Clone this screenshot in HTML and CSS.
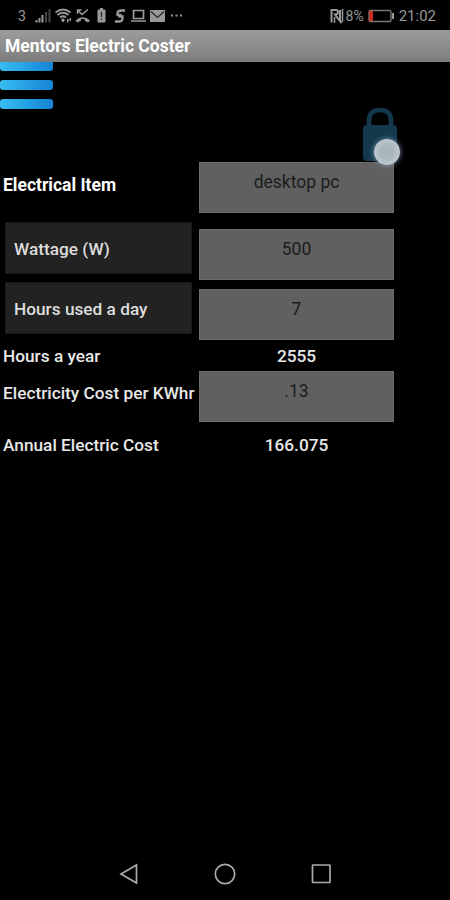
FILE: index.html
```
<!DOCTYPE html>
<html lang="en">
<head>
    <meta charset="UTF-8">
    <meta name="viewport" content="width=device-width, initial-scale=1.0">
    <title>Mentors Electric Coster</title>
    <link rel="stylesheet" href="styles.css">
</head>
<body>
    <div class="status-bar">
        <span class="carrier">3</span>
        <!-- signal, wifi, missed call, battery, sync, laptop, mail, more -->
        <svg class="status-icons" width="150" height="20" viewBox="35 6 150 20">
            <g fill="#999">
                <path d="M35.500 20h2v2.500h-2zM38.500 18h2v4.500h-2zM41.500 15h2v7.500h-2z"/>
                <path fill="#444" d="M45 12h2v10.500h-2zM48.500 9h2v13.500h-2z"/>
                <path d="M61 20l2-2 2 2-2 2.500zM67 19h1.500v3.500h-1.500zM69.500 18h1.500v3h-1.500z"/>
                <path d="M98.500 9.500h1.500v-1.500h3v1.500h1.500q1 0 1 1v11q0 1-1 1h-6q-1 0-1-1v-11q0-1 1-1z"/>
                <path d="M75.500 20.500q7-6.500 14.500 0l-2 2-3.500-2v-1.500h-3.500v1.500l-3.500 2z"/>
                <path d="M150 10h15v12h-15z"/>
                <path d="M171 14.500h2v2h-2zM175.500 14.500h2v2h-2zM180 14.500h2v2h-2z"/>
            </g>
            <g fill="none" stroke="#999" stroke-width="1.700">
                <path d="M55.500 12.500q7.500-6 15 0M57.500 15q5.500-4.500 11 0M60 17.500q3-2.500 6 0"/>
                <path d="M77.500 14v-4h4M78 10.500l4 4 6-5" stroke-width="1.500"/>
                <path d="M125 10.500h-3.500q-4 0-4 3v1.500h4M115 21.500h3.500q4 0 4-3v-2h-4" stroke-width="2.300"/>
                <path d="M133.500 18.500v-8h10v8zM131 21h15"/>
                <path d="M151 11.500l6.500 6 6.500-6" stroke="#222" stroke-width="1.200"/>
                <path d="M101.500 12v5M101.500 18.500v1.500" stroke="#222" stroke-width="1.200"/>
            </g>
        </svg>
        <div class="status-right">
            <svg width="14" height="16" viewBox="0 0 14 16">
                <path d="M1.500 14.500V2h4.500q2 0 2 2t-2 2.500h-1l5 6.500V2" fill="none" stroke="#999" stroke-width="2"/>
                <path d="M12.500 1v12l-2 2M4.500 9v6" fill="none" stroke="#999" stroke-width="1.500"/>
            </svg>
            <span class="percent">8%</span>
            <svg class="battery" width="27" height="14" viewBox="0 0 27 14">
                <rect x="1" y="1.500" width="22" height="11" rx="1.500" fill="none" stroke="#777" stroke-width="1.400"/>
                <rect x="1" y="2" width="4" height="10" fill="#c8322b"/>
                <path d="M24 4h2v6h-2z" fill="#999"/>
            </svg>
            <span class="clock">21:02</span>
        </div>
    </div>

    <div class="title-bar">Mentors Electric Coster</div>

    <div class="toolbar">
        <div class="menu">
            <span></span>
            <span></span>
            <span></span>
        </div>
        <svg class="lock" width="36" height="54" viewBox="0 0 36 54">
            <path d="M7 20v-6q0-11 11-11t11 11v6" fill="none" stroke="#12394c" stroke-width="4.500"/>
            <rect x="1" y="18" width="34" height="36" rx="4" fill="#12394c"/>
        </svg>
        <div class="touch"></div>
    </div>

    <div class="form">
        <div class="row item">
            <label class="bold">Electrical Item</label>
            <div class="field">desktop pc</div>
        </div>
        <div class="row">
            <button class="label-btn">Wattage (W)</button>
            <div class="field lower">500</div>
        </div>
        <div class="row">
            <button class="label-btn">Hours used a day</button>
            <div class="field lower">7</div>
        </div>
        <div class="row year">
            <label>Hours a year</label>
            <div class="result">2555</div>
        </div>
        <div class="row cost">
            <label>Electricity Cost per KWhr</label>
            <div class="field">.13</div>
        </div>
        <div class="row annual">
            <label>Annual Electric Cost</label>
            <div class="result">166.075</div>
        </div>
    </div>

    <div class="nav-bar">
        <svg width="22" height="24" viewBox="0 0 22 24">
            <path d="M3 12L18.500 3v18z"/>
        </svg>
        <svg width="24" height="24" viewBox="0 0 24 24">
            <circle cx="12" cy="12" r="9.700"/>
        </svg>
        <svg width="22" height="24" viewBox="0 0 22 24">
            <rect x="2.500" y="3" width="17.500" height="17.500" rx="0.500"/>
        </svg>
    </div>
</body>
</html>
```

FILE: styles.css
```
* {
    box-sizing: border-box;
}

body {
    margin: 0;
    height: 900px;
    display: flex;
    flex-direction: column;
    overflow: hidden;
    background: #000;
    color: #e8e8e8;
    font-family: Roboto, sans-serif;
    font-size: 17.25px;
    font-weight: 500;
}

.status-bar {
    height: 30px;
    padding: 2px 14px 0 18px;
    display: flex;
    align-items: center;
    color: #999;
    font-size: 15px;
    font-weight: 400;
}

.carrier {
    width: 17px;
    font-size: 14px;
}

.status-right {
    margin-left: auto;
    display: flex;
    align-items: center;
}

.percent {
    margin-left: 2px;
    font-size: 14px;
}

.battery {
    margin: 0 4px 0 4px;
}

.title-bar {
    height: 32px;
    padding-left: 5px;
    line-height: 33px;
    background: linear-gradient(#9c9c9c, #7c7c7c);
    color: #fff;
    font-size: 17.5px;
    font-weight: 700;
}

.toolbar {
    position: relative;
    height: 100px;
    display: flex;
    justify-content: space-between;
    padding-right: 52px;
}

.menu {
    width: 53px;
    display: flex;
    flex-direction: column;
    gap: 9px;
}

.menu span {
    height: 10px;
    border-radius: 3px;
    background: linear-gradient(to right, #37bdf2, #1583d4);
}

.menu span:first-child {
    height: 9px;
    border-radius: 0 0 3px 3px;
}

.lock {
    margin-top: 45px;
}

/* finger dot, sits over the lock and the first field */
.touch {
    position: absolute;
    right: 50px;
    bottom: -3px;
    width: 26px;
    height: 26px;
    border-radius: 50%;
    background: radial-gradient(#a9b7bd 35%, #c3cbd2 75%);
    box-shadow: 0 0 4px 1px rgba(140, 165, 195, 0.6);
    z-index: 1;
}

.form {
    flex: 1;
}

.row {
    height: 60px;
    display: grid;
    grid-template-columns: 199px 195px;
    align-items: start;
}

.row label {
    padding-left: 3px;
    line-height: 20px;
    white-space: nowrap;
}

.item label {
    margin-top: 13px;
}

.row .bold {
    color: #fff;
    font-size: 17.5px;
    font-weight: 700;
}

.label-btn {
    width: 187px;
    height: 52px;
    margin-left: 5px;
    padding: 1px 8px 0;
    border: 1px solid #181818;
    background: #222;
    color: #ddd;
    font: inherit;
    text-align: left;
}

.field {
    height: 51px;
    padding-top: 9px;
    border: 1px solid #6c6c6c;
    background: #606060;
    color: #1c1c1c;
    font-size: 17.5px;
    font-weight: 400;
    line-height: 20px;
    text-align: center;
}

.lower {
    margin-top: 7px;
}

.result {
    line-height: 20px;
    text-align: center;
}

.year {
    height: 29px;
    padding-top: 4px;
}

.cost {
    height: 64px;
}

.cost label {
    margin-top: 12px;
}

.annual {
    height: 30px;
}

.nav-bar {
    height: 38px;
    display: flex;
    justify-content: center;
    gap: 73px;
}

.nav-bar svg {
    fill: none;
    stroke: #aaa;
    stroke-width: 1.7;
}
```
